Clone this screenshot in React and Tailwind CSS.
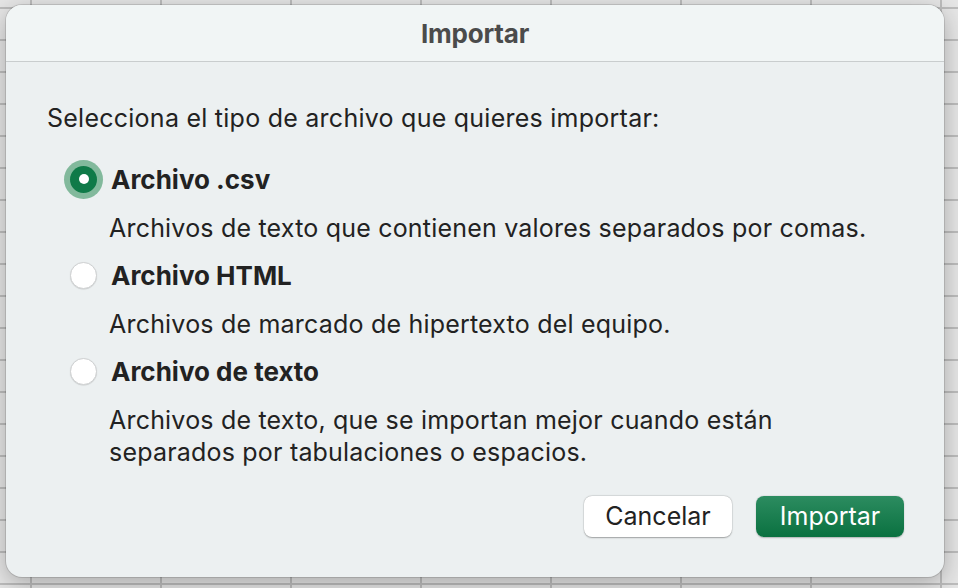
import React, { useState } from 'react';

const options = [
  { id: 'csv', label: 'Archivo .csv', desc: ['Archivos de texto que contienen valores separados por comas.'] },
  { id: 'html', label: 'Archivo HTML', desc: ['Archivos de marcado de hipertexto del equipo.'] },
  {
    id: 'txt',
    label: 'Archivo de texto',
    desc: ['Archivos de texto, que se importan mejor cuando están', 'separados por tabulaciones o espacios.'],
  },
];

function Radio({ checked }) {
  if (checked) {
    return (
      <div className="w-[39px] h-[39px] rounded-full bg-[#82b99c] flex items-center justify-center">
        <div className="w-[27px] h-[27px] rounded-full bg-[#0f7a48] flex items-center justify-center">
          <div className="w-[10px] h-[10px] rounded-full bg-white" />
        </div>
      </div>
    );
  }
  return (
    <div className="w-[39px] h-[39px] flex items-center justify-center">
      <div className="w-[27px] h-[27px] rounded-full bg-white border border-[#cfd1d2] shadow-[0_0.5px_1px_rgba(0,0,0,0.15)]" />
    </div>
  );
}

export default function App() {
  const [selected, setSelected] = useState('csv');

  return (
    <div
      className="relative w-[958px] h-[588px] overflow-hidden bg-[#e6e6e6] bg-[image:linear-gradient(to_right,#bdbdbd_2px,transparent_2px),linear-gradient(to_bottom,#bdbdbd_2px,transparent_2px)] bg-[size:130px_32px] bg-[position:30px_7px]"
      style={{ fontFamily: 'Inter, "Noto Sans", sans-serif' }}
    >
      <div className="absolute left-[6px] top-[5px] w-[938px] h-[572px] rounded-[16px] bg-[#ecf0f1] shadow-[0_6px_24px_rgba(0,0,0,0.28),0_0_0_1px_rgba(0,0,0,0.12)] flex flex-col overflow-hidden">
        {/* title bar */}
        <div className="h-[57px] shrink-0 bg-[#f1f5f5] border-b border-[#c9cdce] flex items-center justify-center">
          <span className="text-[26px] font-bold text-[#4b4b4b] tracking-[-0.2px]">Importar</span>
        </div>

        <div className="flex-1 flex flex-col pl-[41px] pr-[40px] pt-[40px] text-[#222222]">
          <p className="text-[25px] leading-[32px] tracking-[0.25px]">Selecciona el tipo de archivo que quieres importar:</p>

          <div className="flex flex-col mt-[25px] ml-[17px]">
            {options.map((o, i) => (
              <div key={o.id} className={i > 0 ? 'mt-[11px]' : ''}>
                <div className="h-[40px] flex items-center cursor-default" onClick={() => setSelected(o.id)}>
                  <Radio checked={selected === o.id} />
                  <span className="ml-[8px] text-[26px] font-bold tracking-[0px]">{o.label}</span>
                </div>
                <div className="mt-[13px] pl-[45px]">
                  {o.desc.map((d) => (
                    <p key={d} className="text-[25px] leading-[32px] tracking-[0.2px]">{d}</p>
                  ))}
                </div>
              </div>
            ))}
          </div>

          <div className="mt-[28px] flex justify-end gap-[24px]">
            <button className="w-[148px] h-[41px] rounded-[8px] bg-white text-[25px] text-[#222] shadow-[0_0.5px_1.5px_rgba(0,0,0,0.3),0_0_0_0.5px_rgba(0,0,0,0.08)]">
              Cancelar
            </button>
            <button className="w-[148px] h-[41px] rounded-[8px] bg-[linear-gradient(to_bottom,#2c8c60,#0a7140)] text-[25px] text-white shadow-[0_0.5px_1.5px_rgba(0,0,0,0.25)]">
              Importar
            </button>
          </div>
        </div>
      </div>
    </div>
  );
}
